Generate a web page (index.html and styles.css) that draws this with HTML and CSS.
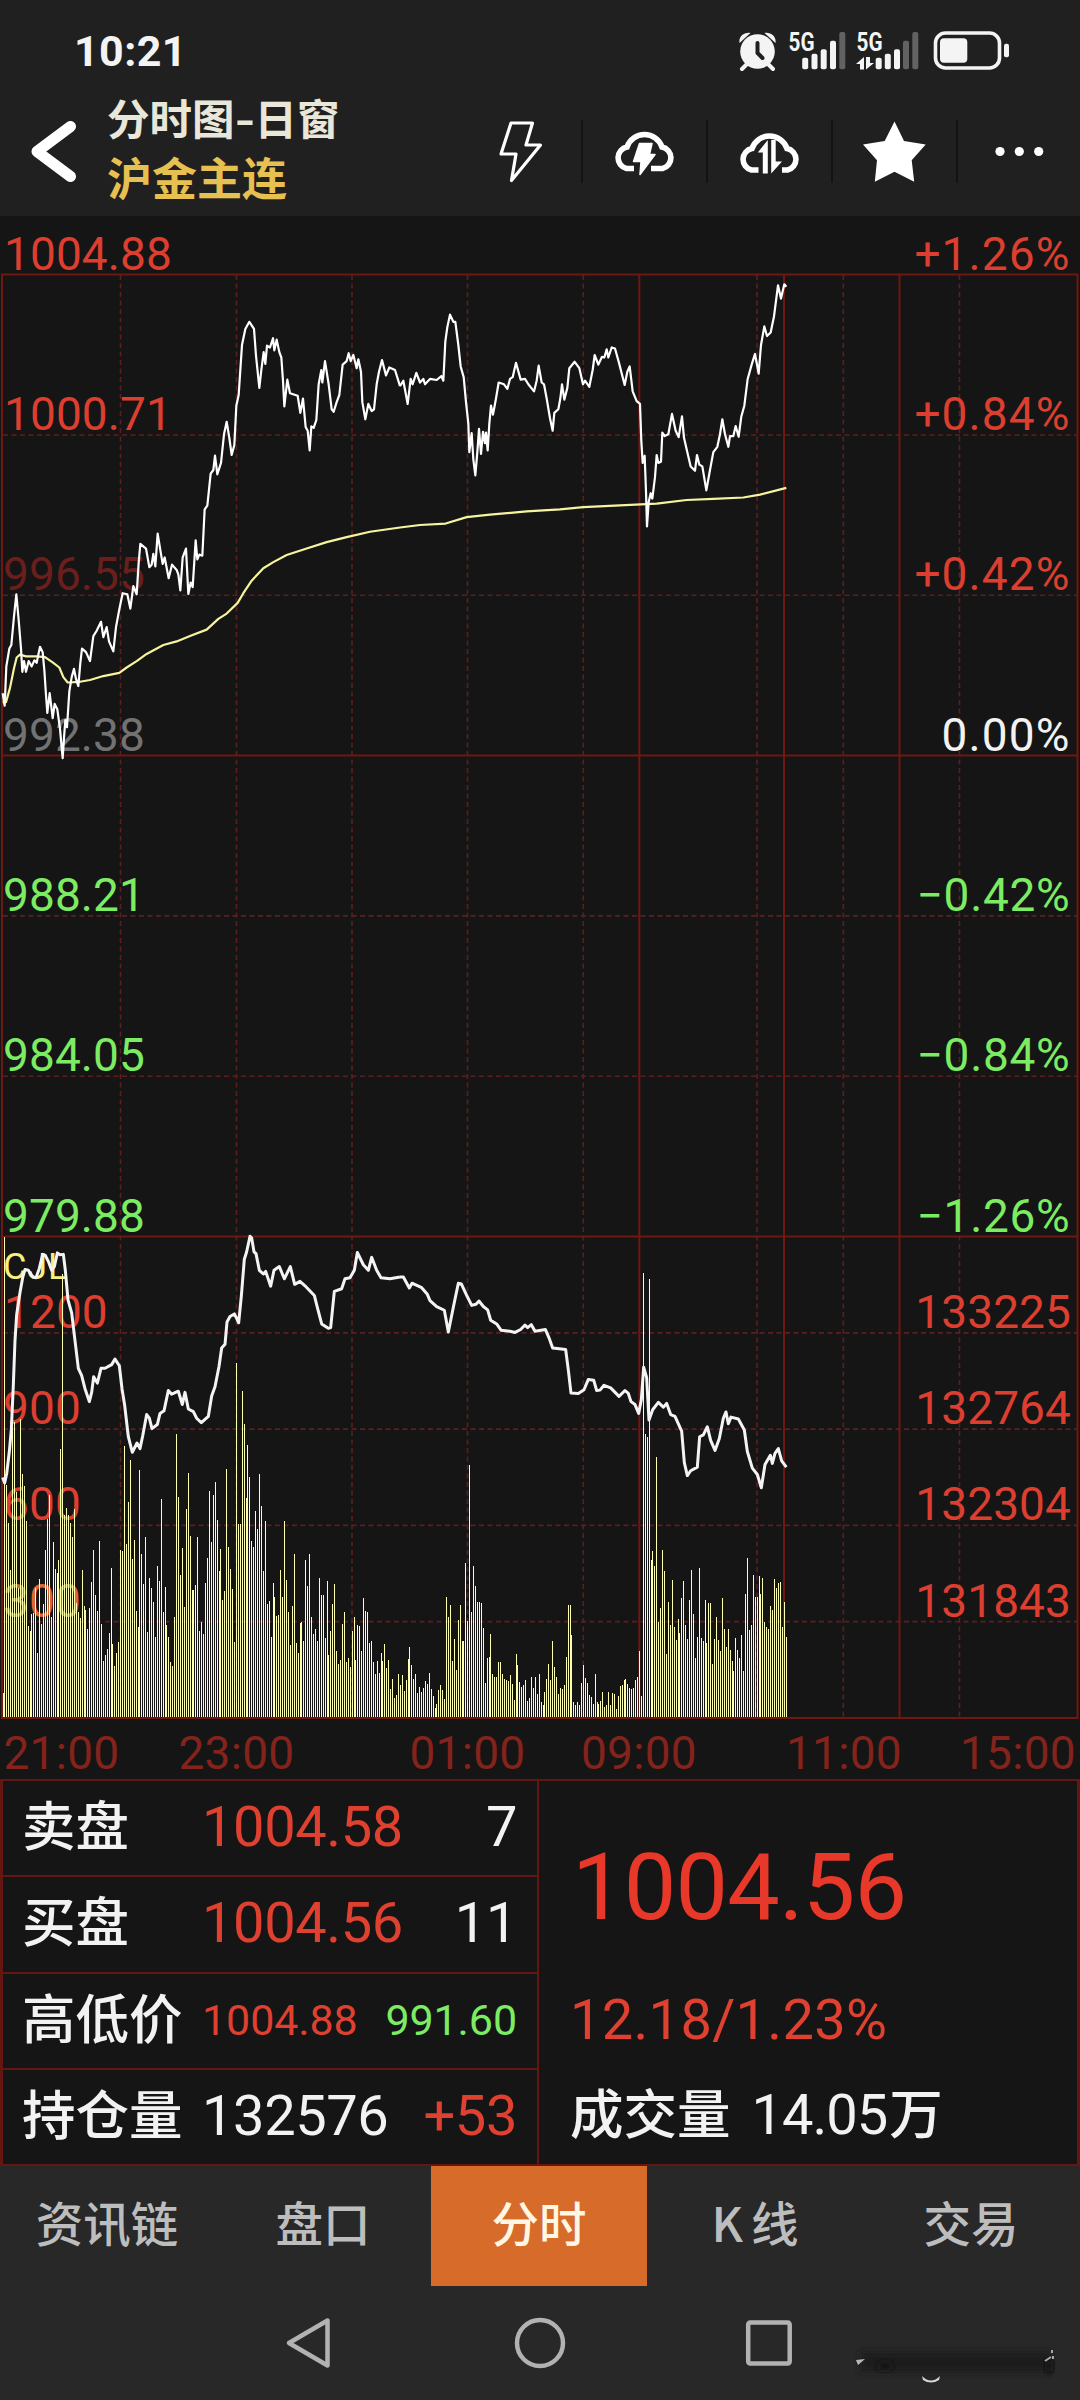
FILE: index.html
```html
<!DOCTYPE html>
<html lang="zh-CN">
<head>
<meta charset="utf-8">
<title>沪金主连 分时图</title>
<link rel="stylesheet" href="styles.css">
</head>
<body>
<div class="screen">
  <div class="status">
    <span class="clock">10:21</span>
    <svg class="status-icons" viewBox="735 26 280 48" width="280" height="48">
      <g fill="#f4f4f4">
        <circle cx="757.5" cy="51.5" r="17.3"/>
        <path d="M739.5 43c-1-6 4-11 11-10zM775.5 43c1-6-4-11-11-10z"/>
        <path d="M747 64l-5 5M768 64l5 5" stroke="#f4f4f4" stroke-width="4" stroke-linecap="round"/>
        <path d="M757.5 43v10l5 5" fill="none" stroke="#202020" stroke-width="4" stroke-linecap="round"/>
        <text x="788.5" y="50.5" class="net" textLength="26" lengthAdjust="spacingAndGlyphs">5G</text>
        <rect x="802.2" y="57.7" width="6" height="11.6" rx="2"/>
        <rect x="811.5" y="53.7" width="6" height="15.6" rx="2"/>
        <rect x="820.7" y="49.3" width="6" height="20" rx="2"/>
        <rect x="830" y="40.7" width="6" height="28.6" rx="2"/>
        <rect x="839.3" y="32" width="6" height="37.3" rx="2" fill="#626262"/>
        <text x="856.5" y="50.5" class="net" textLength="26" lengthAdjust="spacingAndGlyphs">5G</text>
        <path d="M864 57v12.5h-4V64h-4zM866 57v12.5l8-6.500h-4V57z"/>
        <rect x="875.7" y="57.7" width="6" height="11.6" rx="2"/>
        <rect x="884.8" y="53.7" width="6" height="15.6" rx="2"/>
        <rect x="894" y="49.3" width="6" height="20" rx="2"/>
        <rect x="903" y="40.7" width="6" height="28.6" rx="2" fill="#626262"/>
        <rect x="912.3" y="32" width="6" height="37.3" rx="2" fill="#626262"/>
        <rect x="935.500" y="33" width="64" height="35" rx="10" fill="none" stroke="#f4f4f4" stroke-width="3.600"/>
        <rect x="940" y="38.300" width="27.300" height="24.500" rx="4"/>
        <rect x="1004" y="43.700" width="5" height="13.600" rx="2"/>
      </g>
    </svg>
  </div>

  <div class="header">
    <svg class="back" viewBox="28 118 52 66" width="52" height="66"><path d="M70.500 126.500L37 151.500l33.500 25" fill="none" stroke="#fff" stroke-width="11" stroke-linecap="round" stroke-linejoin="round"/></svg>
    <div class="titles">
      <div class="title">分时图<span class="dash">-</span>日窗</div>
      <div class="contract">沪金主连</div>
    </div>
    <svg class="tools" viewBox="490 110 590 84" width="590" height="84">
      <path d="M582 120v63M707 120v63M832 120v63M957 120v63" stroke="#131313" stroke-width="2"/>
      <path d="M511 123h21.500l-6.500 22h14.500l-29 35.500 4.500-26.500h-15z" fill="none" stroke="#fff" stroke-width="3.200" stroke-linejoin="round"/>
      <g fill="none" stroke="#fff" stroke-width="5.600">
        <path d="M634 168.500h-7.500a11 11 0 0 1 .5-21.500A18.500 18.500 0 0 1 662 147a11 11 0 0 1 .5 21.500H651"/>
        <path d="M758.500 170H751.500a11 11 0 0 1 .5-21.500A18.500 18.500 0 0 1 787 148.500a11 11 0 0 1 .5 21.500H782"/>
      </g>
      <path d="M639.500 143.500h12.500l-2.500 11h5.500l-15 20 1-13h-7.500z" fill="#fff" stroke="#fff" stroke-width="1.500" stroke-linejoin="round"/>
      <path d="M767.800 140v33.500h-5V152.500h-5zM771.200 140h4.500v21.500h6.300l-10.800 12z" fill="#fff"/>
      <path d="M894.500 121.500l9.500 19.500 21.700 3.500-14 15.700 2.500 21.600-19.700-10-19.700 10 2.200-21.600-14-15.700 21.700-3.500z" fill="#fff"/>
      <g fill="#fff"><circle cx="1000" cy="151.500" r="4.600"/><circle cx="1019.300" cy="151.500" r="4.600"/><circle cx="1038.700" cy="151.500" r="4.600"/></g>
    </svg>
  </div>

  <svg class="chart" viewBox="0 216 1080 1563" width="1080" height="1563">
    <g class="grid-dash">
      <path d="M3 435H1077M3 595.300H1077M3 915.900H1077M3 1076.300H1077M3 1332.900H1077M3 1429.100H1077M3 1525.400H1077M3 1621.600H1077"/>
      <path d="M120.500 275V1717M236.500 275V1717M352 275V1717M467.500 275V1717M583.300 275V1717M757 275V1717M843.300 275V1717M959.500 275V1717"/>
    </g>
    <path class="grid-line" d="M2 274.600H1077.500V1718H2ZM2 755.600H1077M2 1236.600H1077M639.300 275V1717M784 275V1717M899.500 275V1717"/>
    <g class="axis">
      <text x="4" y="269.500">1004.88</text>
      <text x="4" y="429.800">1000.71</text>
      <text x="3" y="590" class="dim-red">996.55</text>
      <text x="3" y="750.500" class="dim">992.38</text>
      <text x="3" y="910.800" class="down">988.21</text>
      <text x="3" y="1071" class="down">984.05</text>
      <text x="3" y="1231.500" class="down">979.88</text>
      <text x="4" y="1327.800">1200</text>
      <text x="3" y="1424">900</text>
      <text x="3" y="1520.300">600</text>
      <text x="3" y="1616.500" class="mix">300</text>
      <text x="3" y="1279" class="cjl">CJL</text>
    </g>
    <g class="axis end percent">
      <text x="1070.500" y="269.500">+1.26%</text>
      <text x="1070.500" y="429.800">+0.84%</text>
      <text x="1070.500" y="590">+0.42%</text>
      <text x="1070.500" y="750.500" class="zero">0.00%</text>
    </g>
    <g class="axis end percent minus">
      <text x="1070.500" y="910.800" class="down">−0.42%</text>
      <text x="1070.500" y="1071" class="down">−0.84%</text>
      <text x="1070.500" y="1231.500" class="down">−1.26%</text>
    </g>
    <g class="axis end">
      <text x="1071" y="1327.800">133225</text>
      <text x="1071" y="1424">132764</text>
      <text x="1071" y="1520.300">132304</text>
      <text x="1071" y="1616.500">131843</text>
    </g>
    <g class="times">
      <text x="61.500" y="1768.500">21:00</text><text x="236.500" y="1768.500">23:00</text><text x="467.500" y="1768.500">01:00</text>
      <text x="639" y="1768.500">09:00</text><text x="844" y="1768.500">11:00</text><text x="1018" y="1768.500">15:00</text>
    </g>
    <path id="volume" class="volume" d=""/>
    <g class="line avg">
      <polyline transform="translate(0 220) scale(.33333 .35714)" points="8,1350 18,1350 30,1310 42,1255 50,1225 60,1217 78,1222 110,1222 135,1224 160,1240 178,1253 190,1280 203,1295 240,1293 270,1288 310,1277 358,1268 380,1253 410,1235 440,1215 490,1190 530,1180 570,1165 620,1147 655,1117 680,1102 713,1072 730,1045 755,1010 790,975 820,958 860,938 920,920 980,902 1040,888 1110,873 1200,861"/>
      <polyline transform="translate(400 220) scale(.33333 .35714)" points="0,861 60,854 137,850 200,832 270,825 380,816 480,810 550,804 660,799 770,794 860,784 940,781 1030,777 1080,769 1159,750"/>
    </g>
    <g class="line price">
      <polyline transform="translate(0 220) scale(.33333 .35714)" points="8,1325 14,1360 19,1250 28,1200 34,1190 42,1110 49,1048 56,1120 63,1200 67,1265 72,1235 78,1265 86,1235 95,1250 103,1233 110,1240 120,1195 128,1210 133,1260 138,1330 142,1380 149,1325 158,1395 164,1355 172,1370 180,1425 188,1507 192,1450 196,1400 201,1420 208,1320 215,1280 222,1257 228,1285 235,1305 241,1240 246,1200 258,1210 270,1235 280,1165 290,1150 303,1125 310,1168 320,1140 327,1180 340,1208 348,1140 358,1090 368,1045 382,1048 391,1088 400,1025 410,1048 416,960 421,907 438,920 448,972 455,965 460,935 466,970 473,878 482,930 488,963 494,945 506,1003 516,965 530,980 535,992 541,1037 548,945 558,920 565,1047 572,1015 578,1028 587,897 592,950 598,937 607,940 614,810 622,800 632,710 640,700 645,660 652,712 663,680 672,600 680,565 688,610 695,658 703,630 709,520 716,490 726,350 736,305 748,285 762,305 768,380 778,470 784,420 791,370 796,403 801,352 810,357 819,331 823,365 830,335 838,370 844,385 849,450 853,522 862,447 870,485 893,492 901,540 909,500 917,580 923,590 929,645 934,578 941,582 949,560 956,460 964,420 967,455 975,395 986,460 995,530 1001,537 1010,510 1018,490 1028,405 1040,395 1046,373 1052,395 1060,378 1070,415 1075,390 1083,425 1087,510 1096,558 1105,515 1115,535 1122,530 1130,460 1137,425 1146,392 1158,435 1168,413 1185,420 1200,465"/>
      <polyline transform="translate(400 220) scale(.33333 .35714)" points="0,465 10,450 23,515 32,445 38,460 49,428 60,455 70,445 75,460 90,445 110,448 124,437 130,450 136,340 142,300 150,265 160,285 166,285 175,350 182,410 191,440 198,510 205,570 208,650 215,597 220,670 226,715 232,650 237,585 243,655 249,593 255,625 258,595 263,645 268,570 273,520 279,545 288,500 296,455 312,460 322,473 330,445 338,440 348,400 362,447 375,445 385,460 402,480 410,450 416,408 425,455 432,460 440,500 450,555 458,590 463,540 475,530 481,500 486,460 493,503 502,470 508,415 524,397 538,415 549,460 555,450 568,467 578,420 584,378 595,405 606,383 613,385 620,362 625,385 635,357 645,360 657,400 674,462 682,425 689,410 698,480 710,507 720,515 724,620 728,680 734,660 738,760 741,858 746,790 752,765 757,780 765,720 770,658 775,680 783,677 787,595 794,605 805,600 816,543 827,590 836,608 846,550 852,610 862,650 872,690 885,702 891,658 898,685 907,690 919,757 930,700 940,650 952,635 960,600 967,558 975,600 985,635 990,605 1000,605 1007,577 1016,607 1024,550 1033,520 1043,445 1055,405 1065,375 1076,430 1083,350 1093,298 1101,325 1112,315 1122,270 1134,183 1143,220 1153,180 1159,187"/>
    </g>
    <g class="line open-interest">
      <polyline transform="translate(0 1200) scale(.33333 .3699)" points="8,750 14,765 20,740 28,680 34,620 40,500 45,380 50,310 60,250 68,210 75,188 85,190 98,208 108,210 118,185 128,147 136,150 146,168 155,190 163,180 172,143 180,148 190,147 196,190 204,270 215,305 225,380 235,455 245,475 255,510 268,545 275,520 281,478 292,495 303,455 315,455 335,445 345,430 358,448 366,510 374,555 385,640 397,682 411,657 420,672 428,638 440,580 448,590 456,618 472,607 480,577 492,570 505,515 515,525 535,517 547,553 555,520 565,565 580,572 590,590 604,602 625,585 635,530 645,505 657,450 665,400 675,390 681,330 690,315 703,308 710,320 716,332 724,260 733,160 740,140 750,98 755,103 762,140 768,145 778,190 790,200 797,193 812,233 822,190 838,180 853,213 871,180 884,228 900,220 915,232 943,258 952,290 965,335 985,347 992,345 1003,247 1025,240 1035,213 1050,210 1063,190 1072,142 1090,175 1105,190 1115,155 1130,190 1143,210 1170,213 1200,208"/>
      <polyline transform="translate(400 1200) scale(.33333 .3699)" points="0,208 10,208 28,238 36,225 65,237 82,255 90,272 110,288 133,298 145,357 160,290 175,225 184,227 200,258 215,285 228,282 237,273 250,288 263,297 272,325 290,335 303,352 330,355 345,358 362,350 375,338 383,345 394,337 405,355 436,350 448,375 458,400 497,404 505,460 513,522 535,523 552,513 565,485 581,487 590,515 600,514 612,501 632,508 657,531 675,515 685,523 693,545 705,553 716,577 724,540 731,452 740,480 747,595 758,567 775,547 790,560 800,550 812,580 825,585 845,625 853,710 862,745 872,732 892,722 899,640 910,635 922,613 932,650 945,677 958,645 970,590 978,573 985,605 993,587 1015,592 1033,622 1042,680 1057,725 1072,742 1084,778 1095,715 1111,690 1117,712 1125,685 1135,672 1145,705 1159,722"/>
    </g>
  </svg>

  <div class="quote">
    <div class="book">
      <div class="row"><span class="label">卖盘</span><span class="num up">1004.58</span><span class="num last">7</span></div>
      <div class="row"><span class="label">买盘</span><span class="num up">1004.56</span><span class="num last">11</span></div>
      <div class="row range"><span class="label">高低价</span><span class="num small up">1004.88</span><span class="num small last low">991.60</span></div>
      <div class="row"><span class="label">持仓量</span><span class="num">132576</span><span class="num last up">+53</span></div>
    </div>
    <div class="summary">
      <div class="big up">1004.56</div>
      <div class="change up">12.18/1.23%</div>
      <div class="total"><span class="label">成交量</span><span class="num">14.05</span><span class="label">万</span></div>
    </div>
  </div>

  <div class="tabs">
    <div class="tab">资讯链</div><div class="tab">盘口</div><div class="tab active">分时</div><div class="tab"><span class="k">K</span>线</div><div class="tab">交易</div>
  </div>

  <div class="nav">
    <svg viewBox="0 2286 1080 114" width="1080" height="114">
      <defs><filter id="soft" x="-20%" y="-50%" width="140%" height="200%"><feGaussianBlur stdDeviation="3"/></filter></defs>
      <g fill="none" stroke="#b2b2b2" stroke-width="4.500" stroke-linejoin="round">
        <path d="M327.500 2320.500v45L289 2343z"/>
        <circle cx="540" cy="2343" r="23"/>
        <rect x="748.200" y="2322.500" width="41.500" height="41" rx="2"/>
      </g>
      <rect x="860" y="2352" width="190" height="20" fill="#1e1e1e" filter="url(#soft)"/>
      <ellipse cx="885" cy="2366" rx="8" ry="4" fill="#161616" filter="url(#soft)"/>
      <ellipse cx="1049" cy="2366" rx="4" ry="7" fill="#0f0f0f" filter="url(#soft)"/>
      <path d="M856 2360l9-1-7 6z" fill="#b8b8b8"/>
      <path d="M922 2376q9 9 18 0l-1 4q-8 5-16 0z" fill="#d8d8d8"/>
      <path d="M1045 2361l6-4M1052 2350v3M1053 2356v3" stroke="#aaa" stroke-width="2"/>
    </svg>
  </div>
</div>
<script src="volume.js"></script>
</body>
</html>
```
FILE: styles.css
```css
* { box-sizing: border-box; }
body { margin: 0; background: #151515; font-family: Roboto, "Noto Sans CJK SC", sans-serif; }
.screen { width: 1080px; height: 2400px; display: flex; flex-direction: column; overflow: hidden; background: #151515; }
svg { display: block; flex: none; }

.status { height: 100px; flex: none; background: #202020; display: flex; justify-content: space-between; align-items: flex-start; padding: 26px 65px 0 74px; color: #f4f4f4; }
.clock { font-size: 43px; line-height: 50px; font-weight: 700; letter-spacing: .4px; }
.net { font-size: 26px; font-weight: 700; }

.header { height: 116px; flex: none; background: #202020; display: flex; align-items: flex-start; padding-left: 28px; }
.back { margin-top: 18px; }
.titles { flex: 1; padding-left: 27px; font-family: "Noto Sans CJK SC", sans-serif; white-space: nowrap; }
.title { height: 54px; line-height: 33px; font-size: 42.500px; font-weight: 600; color: #e9e6da; }
.dash { display: inline-block; width: 20px; text-align: center; transform: scaleX(1.300); }
.contract { line-height: 46px; font-size: 45px; font-weight: 700; color: #e6c050; }
.tools { margin-top: 10px; }

.chart { background: #151515; }
.grid-dash { fill: none; stroke: #5c1f1f; stroke-width: 1.600; stroke-dasharray: 5 3.500; }
.grid-line { fill: none; stroke: #6e1811; stroke-width: 2; }
.axis text { font-size: 46px; letter-spacing: .1px; fill: #dc3f2f; }
.axis.end text { text-anchor: end; }
.axis.percent text { letter-spacing: 1.100px; }
.axis.minus text { letter-spacing: .7px; }
.axis .dim-red { fill: #6a1f1c; }
.axis .dim { fill: #727272; }
.axis .zero { fill: #f2f2f2; }
.axis .down { fill: #7cec62; }
.axis .mix { fill: #dc6636; }
.axis .cjl { font-size: 36px; fill: #f6f07c; letter-spacing: .8px; }
.times text { font-size: 46px; letter-spacing: .3px; text-anchor: middle; fill: #84231c; }
.volume { fill: #ffffb0; shape-rendering: crispEdges; }
.line polyline { fill: none; vector-effect: non-scaling-stroke; stroke-width: 2.200; stroke-linejoin: round; }
.avg polyline { stroke: #f7f4a0; }
.price polyline { stroke: #fff; }
.open-interest polyline { stroke: #f4f4f4; stroke-width: 3; }

.quote { height: 387px; flex: none; display: flex; border: 2px solid #641712; border-left-width: 3px; border-right-width: 3px; }
.book { width: 536px; border-right: 2px solid #641712; display: flex; flex-direction: column; }
.row { flex: 1; display: flex; align-items: baseline; padding: 1px 20px 0 19px; border-bottom: 2px solid #641712; line-height: 91px; height: 96px; }
.row:last-child { border-bottom: 0; }
.label { font-size: 53.500px; font-weight: 500; color: #f2f2f2; }
.row .label { width: 180px; white-space: nowrap; }
.num { font-size: 56px; letter-spacing: -.4px; color: #f2f2f2; }
.row .num.small { font-size: 43px; letter-spacing: -.1px; position: relative; top: -4px; }
.last { margin-left: auto; }
.row .up, .up { color: #df4030; }
.row .low { color: #7cec62; }
.summary { padding-left: 31px; }
.big { font-size: 93.500px; line-height: 110px; letter-spacing: -.8px; margin-top: 51px; padding-left: 2px; color: #e8382a; }
.change { font-size: 56px; line-height: 66px; letter-spacing: .3px; margin-top: 45px; }
.total { line-height: 66px; margin-top: 29px; white-space: nowrap; }
.total .num { margin: 0 2px 0 21px; letter-spacing: -1px; }

.tabs { height: 120px; flex: none; display: grid; grid-template-columns: repeat(5, 216px); margin-left: -1px; background: #282828; }
.tab { text-align: center; font-size: 47.500px; line-height: 111px; color: #bdbdbd; }
.tab { font-weight: 500; font-family: "Noto Sans CJK SC", sans-serif; }
.tab.active { background: #d76b29; color: #fff6e4; }
.k { margin-right: 8px; }
.nav { height: 114px; flex: none; background: #282828; }
```
FILE: volume.js
```js
// Level of each one-minute bar, top-down: 100 is the top of the pane, 1400 its base.
const levels = [
  100,770,873,1000,610,600,790,1050,592,740,772,868,1152,1165,
  1120,1117,1050,1225,1025,1145,1092,947,862,797,1127,925,998,1007,
  973,673,200,852,832,852,872,912,835,1090,1115,1130,1000,1098,
  1108,1160,1103,1033,945,1068,1110,922,1145,1245,1230,1213,1170,995,
  1200,1260,1225,1195,945,948,665,930,815,703,970,920,1110,1153,
  730,957,1038,912,1167,1022,1050,1087,1180,988,1030,808,1115,1045,
  1150,1180,1250,1260,1127,633,803,1013,941,1100,835,739,907,1053,
  1053,1042,910,1165,1142,1172,1035,968,787,925,797,762,865,1003,
  943,1080,1057,727,938,998,1052,1195,441,875,875,515,606,806,
  662,750,922,938,841,889,741,827,1003,868,1092,1085,1180,1035,
  1073,1125,1122,1000,1073,868,1027,1115,1203,1098,957,1198,1225,1143,
  1142,1192,972,1044,957,1127,1172,1160,1192,1022,1068,1068,1185,1030,
  1230,1165,1092,1038,1220,1254,1244,1147,1115,1250,1238,1263,1165,1127,
  1243,1150,1152,1220,1077,1110,1115,1198,1192,1250,1280,1246,1278,1225,
  1245,1200,1265,1243,1322,1295,1345,1337,1280,1310,1285,1327,1297,1240,
  1208,1257,1295,1282,1332,1317,1330,1318,1300,1307,1279,1323,1342,1372,
  1362,1325,1312,1325,1348,1072,1127,1095,1246,1187,1271,1135,1095,1193,
  1192,982,1138,717,1115,988,1044,1087,1087,1088,1157,1305,1237,1235,
  1173,1280,1290,1290,1250,1248,1282,1295,1297,1300,1285,1308,1352,1227,
  1257,1303,1317,1312,1298,1355,1346,1290,1320,1290,1335,1282,1357,1365,
  1330,1295,1255,1298,1192,1263,1290,1335,1320,1322,1312,1235,1095,1095,
  1175,1357,1365,1358,1365,1305,1257,1293,1305,1338,1343,1362,1282,1358,
  1362,1353,1330,1370,1365,1330,1365,1333,1335,1375,1342,1315,1312,1297,
  1295,1308,1320,1322,1320,1298,1290,1218,1342,197,633,640,213,972,
  948,990,695,1140,1103,947,1003,1227,1087,1150,1027,1153,1190,1133,
  1170,1077,1030,1150,1187,1082,1000,1120,1238,1182,995,1185,1193,1080,
  1198,1090,1090,1255,1187,1127,1190,1218,1077,1160,1207,1160,1217,1245,
  1273,1185,1217,1238,1177,1273,1065,968,1162,1150,1013,1073,1073,1017,
  1065,1022,1140,1155,1160,1098,1107,1025,1050,1035,1033,1153,1087,1182
];
const base = 1717;
let d = `M3 ${base}V1693h1V${base}z`;
levels.forEach((level, i) => {
  const x = 4 + 2 * i - Math.floor(i / 14);
  const top = 1200 + level * 0.3699;
  d += `M${x} ${base}V${top.toFixed(1)}h1V${base}z`;
});
document.getElementById("volume").setAttribute("d", d);
```
